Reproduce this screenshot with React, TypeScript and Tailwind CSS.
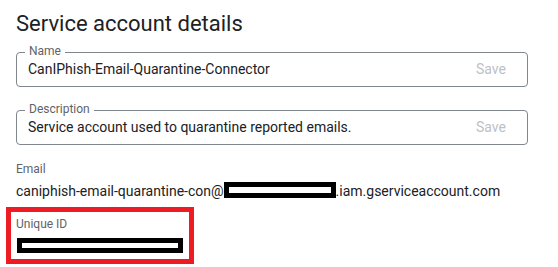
export default function App() {
    return (
        <div className="w-[558px] h-[267px] overflow-hidden bg-white pl-4 pt-[10px] font-['Roboto',sans-serif]">

            <h1 className="text-[22px] leading-[28px] text-[#202124]">
                Service account details
            </h1>

            {/* Name */}
            <div className="relative mt-[14px] flex h-[35px] w-[512px] items-center justify-between rounded border border-[#80868b] pl-[11px] pr-[21px]">
                <span className="absolute -top-[10px] left-2 bg-white px-1 text-xs leading-4 text-[#5f6368]">
                    Name
                </span>
                <span className="text-[14px] text-[#202124]">CanIPhish-Email-Quarantine-Connector</span>
                <span className="text-[14px] text-[#bdc1c6]">Save</span>
            </div>

            {/* Description */}
            <div className="relative mt-[23px] flex h-[35px] w-[512px] items-center justify-between rounded border border-[#80868b] pl-[11px] pr-[21px]">
                <span className="absolute -top-[10px] left-2 bg-white px-1 text-xs leading-4 text-[#5f6368]">
                    Description
                </span>
                <span className="text-[14px] text-[#202124]">Service account used to quarantine reported emails.</span>
                <span className="text-[14px] text-[#bdc1c6]">Save</span>
            </div>

            {/* Email */}
            <div className="mt-4 text-xs leading-4 text-[#5f6368]">Email</div>
            <div className="mt-1 text-[14px] leading-5 text-[#202124] whitespace-nowrap">
                caniphish-email-quarantine-con@
                <span className="inline-block h-4 w-[112px] border-[5px] border-black bg-white align-[-2px]" />
                .iam.gserviceaccount.com
            </div>

            {/* Unique ID, highlighted */}
            <div className="-ml-[10px] mt-[6px] h-[57px] w-[188px] border-[5px] border-[#ed1c24] pl-[5px] pt-1">
                <div className="text-xs leading-4 text-[#5f6368]">Unique ID</div>
                <div className="ml-px mt-[6px] h-[15px] w-[166px] border-[5px] border-black bg-white" />
            </div>

        </div>
    )
}
